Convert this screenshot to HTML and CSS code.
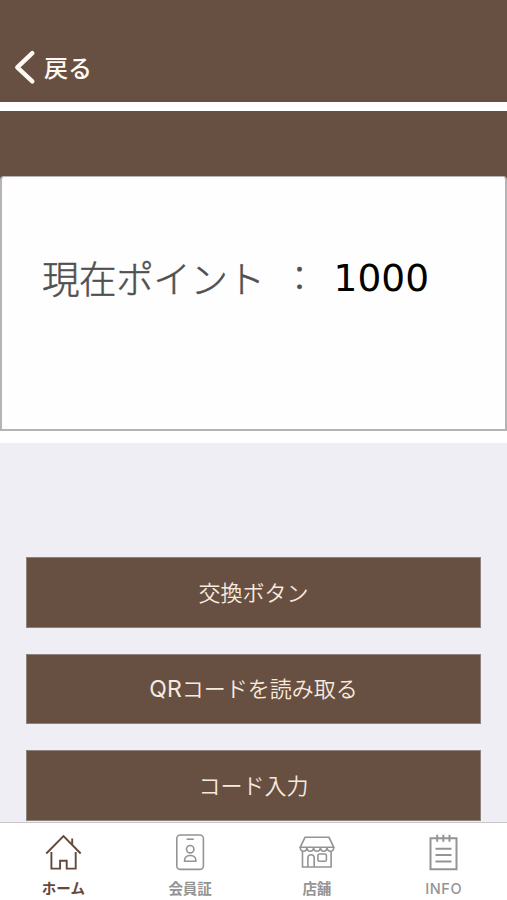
FILE: index.html
```html
<!DOCTYPE html>
<html lang="ja">
<head>
<meta charset="utf-8">
<title>ポイント</title>
<link rel="stylesheet" href="styles.css">
</head>
<body>
<div class="app">
  <header class="header">
    <a class="back">
      <svg class="chevron" width="24" height="36" viewBox="0 0 24 36"><path d="M20.3 4.2 5.3 18.4l15 14"/></svg>
      <span>戻る</span>
    </a>
  </header>
  <div class="banner"></div>
  <section class="card">
    <span class="label">現在ポイント</span>
    <span class="colon">：</span>
    <span class="points">1000</span>
  </section>
  <main class="actions">
    <button class="action">交換ボタン</button>
    <button class="action"><span class="latin">QR</span>コードを読み取る</button>
    <button class="action">コード入力</button>
  </main>
  <nav class="tabs">
    <a class="tab active">
      <svg width="40" height="40" viewBox="0 0 40 40"><path d="M3.3 21.5 20.5 4l17.2 17.5M29.2 12.8V6.5M8.4 20v16.6h8.7v-7.8h6.6v7.8h9V20"/></svg>
      <span>ホーム</span>
    </a>
    <a class="tab">
      <svg width="40" height="40" viewBox="0 0 40 40"><rect x="6.8" y="3" width="26.6" height="34.4" rx="3.5"/><path d="M16.6 7.2h7.2"/><circle cx="20.2" cy="17.2" r="3.7"/><path d="M14.6 29.3v-1.2c0-6.2 11.2-6.2 11.2 0v1.2z"/></svg>
      <span>会員証</span>
    </a>
    <a class="tab">
      <svg width="40" height="40" viewBox="0 0 40 40"><path d="M8 5.3h24L36.8 15.3H3.2zM3.2 15.3c0 5.2 6.7 5.2 6.7 0 0 5.2 6.7 5.2 6.7 0 0 5.2 6.8 5.2 6.8 0 0 5.2 6.7 5.2 6.7 0 0 5.2 6.7 5.2 6.7 0M5.5 19v16h28.6V19M10.9 35v-9.3c0-4 6.3-4 6.3 0V35"/><rect x="20.9" y="22" width="8.5" height="7.2" rx="1.5"/></svg>
      <span>店舗</span>
    </a>
    <a class="tab info">
      <svg width="40" height="40" viewBox="0 0 40 40"><path d="M6.5 6.3h26v31h-26zM13.2 2.7v7M19.3 2.7v7M25.5 2.7v7M11.5 16.7h16M11.5 23.1h16M11.5 29.6h16"/></svg>
      <span>INFO</span>
    </a>
  </nav>
</div>
</body>
</html>
```

FILE: styles.css
```css
* { box-sizing: border-box; }

body {
  margin: 0;
  font-family: "Noto Sans CJK JP", sans-serif;
}

.app {
  display: flex;
  flex-direction: column;
  width: 507px;
  height: 900px;
  overflow: hidden;
  background: #fff;
}

.header {
  flex: none;
  height: 102px;
  padding: 49px 0 0 12px;
  background: #674f42;
}

.back {
  display: flex;
  align-items: center;
  gap: 8px;
  height: 36px;
  color: #fffaf3;
  font-size: 24px;
  font-weight: 500;
  line-height: 36px;
}

.chevron {
  fill: none;
  stroke: #fffaf3;
  stroke-width: 4.4;
  stroke-linecap: round;
  stroke-linejoin: round;
}

.banner {
  flex: none;
  height: 65px;
  margin-top: 9px;
  background: #674f42;
}

.card {
  flex: none;
  display: flex;
  align-items: center;
  height: 255px;
  margin-bottom: 12px;
  padding: 0 0 54px 40px;
  border: solid #b5b3b3;
  border-width: 1px 2px 2px;
  border-radius: 4px 4px 0 0;
  background: #fefefe;
  color: #505050;
  font-size: 37.5px;
  font-weight: 300;
  box-shadow: 0 -4px 0 #674f42;
}

.label {
  letter-spacing: -0.4px;
  -webkit-text-stroke: 0.5px #505050;
}

.colon {
  margin-left: 18px;
  font-size: 34px;
  -webkit-text-stroke: 0.4px #505050;
}

.points {
  margin: 3px 0 0 17px;
  color: #000;
  font-family: "DejaVu Sans", sans-serif;
  font-size: 37.5px;
  font-weight: 400;
}

.actions {
  flex: 1;
  min-height: 0;
  display: flex;
  flex-direction: column;
  gap: 26px;
  padding: 114px 26px 0;
  overflow: hidden;
  background: #efeef5;
}

.action {
  flex: none;
  height: 70.5px;
  padding: 0 0 3px;
  border: 1px solid #8f827a;
  background: #674f42;
  color: #f7e9de;
  font: 350 22px "Noto Sans CJK JP", sans-serif;
}

.latin {
  font-family: Inter, sans-serif;
  font-size: 23px;
  font-weight: 400;
}

.tabs {
  flex: none;
  display: grid;
  grid-template-columns: repeat(4, 1fr);
  height: 78px;
  padding-top: 9px;
  border-top: 1px solid #c9c4c8;
  background: #fff;
}

.tab {
  display: flex;
  flex-direction: column;
  align-items: center;
  gap: 6px;
  color: #949494;
  font-size: 14.5px;
  font-weight: 700;
  line-height: 20px;
}

.tab svg {
  fill: none;
  stroke: currentColor;
  stroke-width: 1.6;
}

.active { color: #65483c; }

.active svg { stroke-width: 1.9; }

.info svg { stroke-width: 2; }

.info span {
  margin-top: 1px;
  font-family: Inter, sans-serif;
  font-size: 14.5px;
  font-weight: 500;
  letter-spacing: 0.6px;
}
```
